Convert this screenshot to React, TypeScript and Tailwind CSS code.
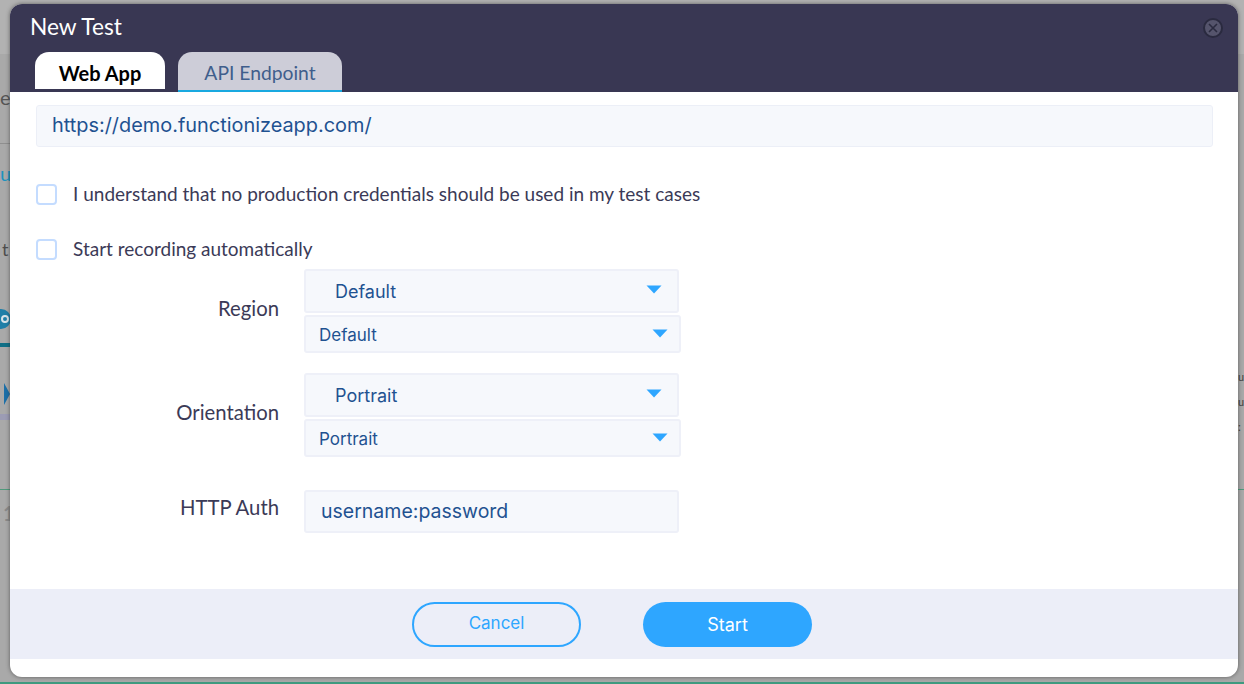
import { ReactNode } from 'react';

const Caret = ({ className }: { className: string }) => (
  <svg width="16" height="9" viewBox="0 0 16 9" className={className}>
    <path d="M0.5 0.5H15.5L8 8.5Z" fill="#2ea6ff" />
  </svg>
);

const CheckRow = ({ label, className }: { label: string; className: string }) => (
  <label className={`flex items-center ${className}`}>
    <span className="h-[21px] w-[21px] rounded-[4px] border-2 border-[#c4dcff] bg-white" />
    <span className="ml-[16px] text-[19px] leading-[24px] text-[#3b3a57]">{label}</span>
  </label>
);

const FieldRow = ({ label, children, className, labelClass }: { label: string; children: ReactNode; className: string; labelClass: string }) => (
  <div className={`flex items-center ${className}`}>
    <span className={`w-[243px] text-right text-[20.3px] leading-[26px] text-[#3b3a57] ${labelClass}`}>{label}</span>
    <div className="ml-[25px] flex flex-col">{children}</div>
  </div>
);

const SelectPair = ({ value }: { value: string }) => (
  <>
    <div className="flex h-[44px] w-[375px] items-center justify-between rounded-[3px] border-2 border-[#eef0f8] bg-[#f6f8fc] pl-[29px] pr-[15px]">
      <span className="font-['Inter',sans-serif] text-[18px] text-[#1f5291]">{value}</span>
      <Caret className="mb-[4px]" />
    </div>
    <div className="mt-[2px] flex h-[38px] w-[377px] items-center justify-between rounded-[3px] border-2 border-[#eef0f8] bg-[#f6f8fc] pl-[13px] pr-[11px]">
      <span className="pt-[3px] font-['Inter',sans-serif] text-[17px] text-[#1f5291]">{value}</span>
      <Caret className="mb-[1px]" />
    </div>
  </>
);

export default function App() {
  return (
    <div className="relative h-[684px] w-[1244px] overflow-hidden bg-[#a9a9a9] font-['Lato',sans-serif]">
      {/* dimmed page behind the modal */}
      <div className="absolute left-0 top-0 h-[54px] w-full bg-[#b2b2b2]" />
      <div className="absolute left-0 top-[143px] h-px w-[10px] bg-[#8f8f8f]" />
      <div className="absolute left-0 top-[85px] text-[20px] leading-[24px] text-[#555555]">e</div>
      <div className="absolute left-0 top-[161px] text-[20px] leading-[24px] text-[#1b93c0]">u</div>
      <div className="absolute left-[2px] top-[237px] text-[18px] leading-[24px] text-[#4d4d4d]">t</div>
      <div className="absolute left-[-9px] top-[309px] flex h-[20px] w-[20px] items-center justify-center rounded-full bg-[#1f7fa8]">
        <span className="ml-[8px] h-[8px] w-[8px] rounded-full border-2 border-[#d8e4ea]" />
      </div>
      <div className="absolute left-0 top-[343px] h-[4px] w-[10px] bg-[#0f6f86]" />
      <div className="absolute left-[4px] top-[383px] h-[22px] w-[6px] bg-[#1c6fa8] [clip-path:polygon(0_0,100%_50%,0_100%)]" />
      <div className="absolute left-0 top-[414px] h-[6px] w-[10px] bg-[#9c9cb4]" />
      <div className="absolute left-0 top-[489px] h-px w-[10px] bg-[#4f9a7c]" />
      <div className="absolute left-[3px] top-[502px] text-[20px] font-bold leading-[22px] text-[#8a8a8a]">1</div>
      <div className="absolute bottom-0 left-0 h-[2px] w-full bg-[#3f9a7f]" />
      <div className="absolute left-[1238px] top-[489px] h-px w-[6px] bg-[#4f9a7c]" />
      <div className="absolute left-[1238px] top-[364px] text-[11px] leading-[25px] text-[#3f3f3f]">u<br />u<br />:</div>

      <div className="absolute left-[10px] top-[4px] flex h-[673px] w-[1228px] flex-col overflow-hidden rounded-[12px] bg-white shadow-[0_0_4px_rgba(40,40,40,0.6)]">
        <header className="relative h-[88px] shrink-0 bg-[#393753]">
          <h2 className="pl-[20px] pt-[8px] text-[22.7px] leading-[30px] text-white">New Test</h2>
          <div className="absolute left-[25px] top-[48px] flex items-start">
            <div className="flex h-[37px] w-[130px] items-center justify-center rounded-t-[14px] bg-white pt-[4px] text-[20px] font-bold text-black">
              Web App
            </div>
            <div className="ml-[13px] flex h-[40px] w-[164px] items-center justify-center rounded-t-[14px] border-b-2 border-[#19a9e0] bg-[#cdcdd8] pt-[5px] text-[19.3px] text-[#3f5e8c]">
              API Endpoint
            </div>
          </div>
          <button className="absolute right-[15px] top-[14px] flex h-[20px] w-[20px] items-center justify-center rounded-full border-2 border-[#2a2a3f] bg-[#55546c]">
            <svg width="10" height="10" viewBox="0 0 10 10">
              <path d="M1 1L9 9M9 1L1 9" stroke="#2a2a3f" strokeWidth="1.6" />
            </svg>
          </button>
        </header>

        <div className="flex-1 px-[26px]">
          <div className="mt-[13px] flex h-[42px] w-[1177px] items-center rounded-[3px] border border-[#eceff7] bg-[#f6f8fc] pl-[15px] font-['Inter',sans-serif] text-[19.9px] text-[#1f5291]">
            https://demo.functionizeapp.com/
          </div>
          <CheckRow className="mt-[35px]" label="I understand that no production credentials should be used in my test cases" />
          <CheckRow className="mt-[31px]" label="Start recording automatically" />

          <FieldRow className="mt-[8px]" labelClass="mb-[6px]" label="Region">
            <SelectPair value="Default" />
          </FieldRow>
          <FieldRow className="mt-[20px]" labelClass="mb-[6px]" label="Orientation">
            <SelectPair value="Portrait" />
          </FieldRow>
          <FieldRow className="mt-[33px]" labelClass="mb-[10px]" label="HTTP Auth">
            <div className="flex h-[43px] w-[375px] items-center rounded-[3px] border-2 border-[#eef0f8] bg-[#f6f8fc] pl-[15px] font-['Inter',sans-serif] text-[19.5px] text-[#1f5291]">
              username:password
            </div>
          </FieldRow>
        </div>

        <footer className="mb-[18px] flex h-[70px] shrink-0 items-center justify-center gap-[62px] bg-[#eceef8] pr-[24px]">
          <button className="h-[45px] w-[169px] rounded-full border-2 border-[#2ea6ff] font-['Inter',sans-serif] text-[17px] text-[#2ea6ff]">
            Cancel
          </button>
          <button className="h-[45px] w-[169px] rounded-full bg-[#2ea6ff] font-['Inter',sans-serif] text-[18px] text-white">
            Start
          </button>
        </footer>
      </div>
    </div>
  );
}
